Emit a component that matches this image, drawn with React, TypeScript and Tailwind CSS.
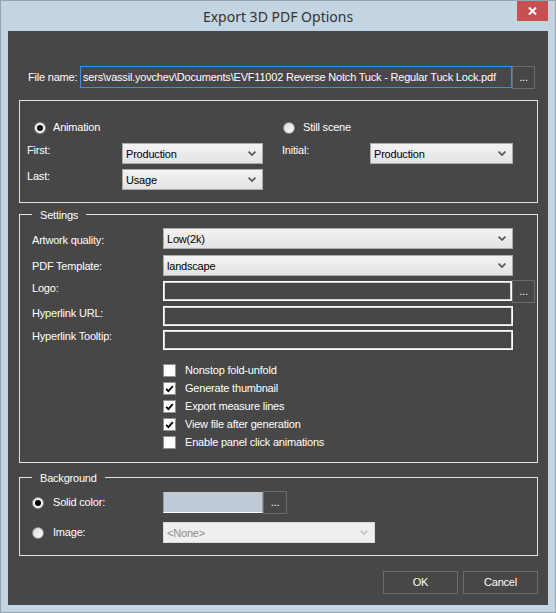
import React from 'react';

type ComboProps = {
  value: string;
  className?: string;
  disabled?: boolean;
};

function Chevron({ color }: { color: string }) {
  return (
    <svg width="8" height="5" viewBox="0 0 8 5">
      <path d="M0.6 0.6 L4 4 L7.4 0.6" fill="none" stroke={color} strokeWidth="1.7" />
    </svg>
  );
}

function Combo({ value, className = '', disabled = false }: ComboProps) {
  return (
    <div
      className={`flex h-[21px] items-center justify-between border pl-[3px] pr-[6px] ${
        disabled
          ? 'border-[#dadada] bg-[#efefef] text-[#8c8c8c]'
          : 'border-[#acacac] bg-linear-to-b from-[#f3f3f3] to-[#e3e3e3] text-black'
      } ${className}`}
    >
      <span className="pt-[2px] leading-[13px]">{value}</span>
      <Chevron color={disabled ? '#c4c4c4' : '#555555'} />
    </div>
  );
}

function Radio({ checked = false }: { checked?: boolean }) {
  return (
    <span
      className={`flex h-[12px] w-[12px] shrink-0 items-center justify-center rounded-full border border-[#8a8a8a] ${
        checked ? 'bg-[#f6f6f6]' : 'bg-linear-to-br from-[#d8d8d8] to-white'
      }`}
    >
      {checked && <span className="h-[6px] w-[6px] rounded-full bg-black" />}
    </span>
  );
}

function Checkbox({ checked = false, label }: { checked?: boolean; label: string }) {
  return (
    <div className="flex h-[18px] items-start">
      <span className="flex h-[13px] w-[13px] shrink-0 items-center justify-center border border-[#8e8f8f] bg-white">
        {checked && (
          <svg width="9" height="8" viewBox="0 0 9 8">
            <path d="M1.2 3.8 L3.4 6.2 L7.8 1.2" fill="none" stroke="#000" strokeWidth="1.8" />
          </svg>
        )}
      </span>
      <span className="ml-[9px] leading-[13px]">{label}</span>
    </div>
  );
}

function DotsButton({ className = '' }: { className?: string }) {
  return (
    <div
      className={`flex h-[23px] w-[23px] shrink-0 items-end justify-center border border-[#6c6c6c] bg-[#474747] pb-[5px] text-[11px] leading-none text-white ${className}`}
    >
      ...
    </div>
  );
}

function TextBox({ className = '' }: { className?: string }) {
  return (
    <div
      className={`h-[20px] border border-white bg-[#474747] shadow-[inset_0_0_0_1px_#d4d4d4] ${className}`}
    />
  );
}

function Legend({ children }: { children: React.ReactNode }) {
  return (
    <span className="absolute left-[12px] top-[-6px] bg-[#474747] px-[8px] leading-[13px]">
      {children}
    </span>
  );
}

export default function App() {
  return (
    <div className="h-[613px] w-[556px] border border-[#94a4b2] bg-[#c3d4e3] font-['Liberation_Sans',Arial,sans-serif] text-[11px] tracking-[-0.2px] text-white">
      {/* Title bar */}
      <div className="relative flex h-[30px] items-center justify-center">
        <span className="font-['Noto_Sans',sans-serif] text-[14px] tracking-normal text-[#333333]">
          Export 3D PDF Options
        </span>
        <div className="absolute right-[7px] top-0 flex h-[20px] w-[31px] items-center justify-center bg-[#c75050]">
          <svg width="9" height="8" viewBox="0 0 9 8">
            <path d="M1 0.5 L8 7.5 M8 0.5 L1 7.5" stroke="#fff" strokeWidth="2" />
          </svg>
        </div>
      </div>

      {/* Client area */}
      <div className="ml-[7px] h-[574px] w-[540px] bg-[#474747] pl-[11px] pr-[10px]">
        {/* File name */}
        <div className="flex items-start pt-[35px]">
          <span className="ml-[9px] w-[52px] pt-[5px] leading-[13px]">File name:</span>
          <div className="flex h-[22px] w-[432px] items-center overflow-hidden whitespace-nowrap border border-[#3d8ee6] bg-[#474747] pl-[2px] pt-[1px] leading-[13px]">
            sers\vassil.yovchev\Documents\EVF11002 Reverse Notch Tuck - Regular Tuck Lock.pdf
          </div>
          <DotsButton />
        </div>

        {/* Animation / Still scene */}
        <div className="mt-[11px] flex h-[103px] w-[519px] border border-[#e2e2e2] pt-[20px]">
          <div className="w-[262px]">
            <div className="ml-[14px] flex h-[13px] items-center">
              <Radio checked />
              <span className="ml-[7px] leading-[13px]">Animation</span>
            </div>
            <div className="mt-[9px] flex items-start">
              <span className="ml-[7px] mt-[1px] w-[95px] leading-[13px]">First:</span>
              <Combo value="Production" className="w-[141px]" />
            </div>
            <div className="mt-[5px] flex items-start">
              <span className="ml-[7px] mt-[1px] w-[95px] leading-[13px]">Last:</span>
              <Combo value="Usage" className="w-[141px]" />
            </div>
          </div>
          <div>
            <div className="ml-[1px] flex h-[13px] items-center">
              <Radio />
              <span className="ml-[8px] leading-[13px]">Still scene</span>
            </div>
            <div className="mt-[9px] flex items-start">
              <span className="mt-[1px] w-[88px] leading-[13px]">Initial:</span>
              <Combo value="Production" className="w-[143px]" />
            </div>
          </div>
        </div>

        {/* Settings */}
        <div className="relative mt-[11px] h-[249px] w-[519px] border border-[#e2e2e2] pt-[13px]">
          <Legend>Settings</Legend>
          <div className="flex items-start">
            <span className="ml-[12px] mt-[6px] w-[131px] leading-[13px]">Artwork quality:</span>
            <Combo value="Low(2k)" className="w-[350px]" />
          </div>
          <div className="mt-[6px] flex items-start">
            <span className="ml-[12px] mt-[5px] w-[131px] leading-[13px]">PDF Template:</span>
            <Combo value="landscape" className="w-[350px]" />
          </div>
          <div className="mt-[5px] flex h-[20px] items-start">
            <span className="ml-[12px] mt-[1px] w-[131px] leading-[13px]">Logo:</span>
            <div className="flex h-[20px] items-center">
              <TextBox className="w-[349px]" />
              <DotsButton />
            </div>
          </div>
          <div className="mt-[5px] flex items-start">
            <span className="ml-[12px] mt-[1px] w-[131px] leading-[13px]">Hyperlink URL:</span>
            <TextBox className="w-[350px]" />
          </div>
          <div className="mt-[4px] flex items-start">
            <span className="ml-[12px] w-[131px] leading-[13px]">Hyperlink Tooltip:</span>
            <TextBox className="w-[350px]" />
          </div>
          <div className="ml-[143px] mt-[14px] flex flex-col">
            <Checkbox label="Nonstop fold-unfold" />
            <Checkbox checked label="Generate thumbnail" />
            <Checkbox checked label="Export measure lines" />
            <Checkbox checked label="View file after generation" />
            <Checkbox label="Enable panel click animations" />
          </div>
        </div>

        {/* Background */}
        <div className="relative mt-[14px] h-[79px] w-[519px] border border-[#e2e2e2] pt-[13px]">
          <Legend>Background</Legend>
          <div className="flex h-[23px] items-center">
            <span className="ml-[12px] flex w-[131px] items-center">
              <Radio checked />
              <span className="ml-[9px] leading-[13px]">Solid color:</span>
            </span>
            <div className="h-[21px] w-[100px] border border-b-white border-l-[#9c9c9c] border-r-[#9c9c9c] border-t-[#c9c9c9] bg-[#bfcad7]" />
            <DotsButton className="w-[24px]" />
          </div>
          <div className="mt-[8px] flex h-[21px] items-center">
            <span className="ml-[12px] flex w-[131px] items-center">
              <Radio />
              <span className="ml-[9px] leading-[13px]">Image:</span>
            </span>
            <Combo value="<None>" disabled className="w-[212px]" />
          </div>
        </div>

        {/* Buttons */}
        <div className="mt-[15px] flex justify-end gap-[5px]">
          <div className="flex h-[23px] w-[75px] items-center justify-center border border-[#6c6c6c] leading-[13px]">
            OK
          </div>
          <div className="flex h-[23px] w-[75px] items-center justify-center border border-[#6c6c6c] leading-[13px]">
            Cancel
          </div>
        </div>
      </div>
    </div>
  );
}
